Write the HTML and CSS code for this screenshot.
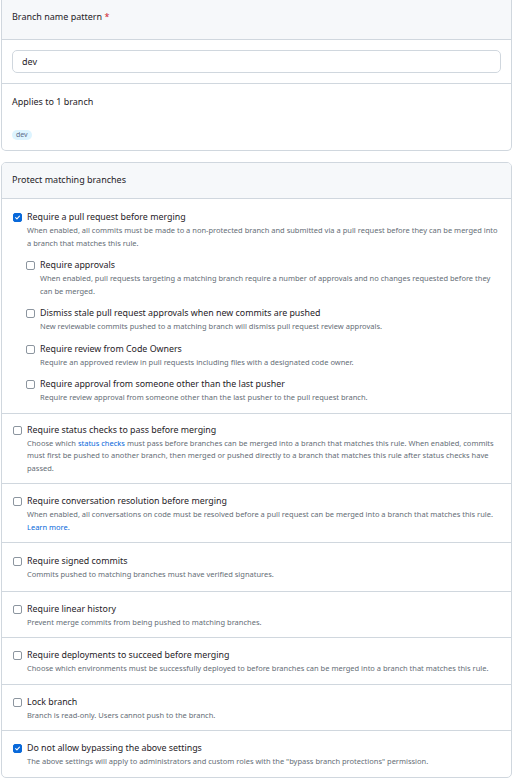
FILE: index.html
```html
<!DOCTYPE html>
<html>
<head>
<meta charset="utf-8">
<link rel="stylesheet" href="styles.css">
</head>
<body>
<div class="box box-top">
  <div class="box-header">Branch name pattern <span class="req">*</span></div>
  <div class="box-section input-section">
    <div class="text-input">dev</div>
  </div>
  <div class="box-section applies">
    <div class="applies-title">Applies to 1 branch</div>
    <span class="badge">dev</span>
  </div>
</div>

<div class="box box-protect">
  <div class="box-header">Protect matching branches</div>
  <div class="row row-first">
    <div class="opt">
      <span class="cb checked"><svg viewBox="0 0 10 10"><path d="M2.3 5.2 L4.2 7 L7.8 3" fill="none" stroke="#fff" stroke-width="1.5" stroke-linecap="round" stroke-linejoin="round"/></svg></span>
      <div class="opt-body">
        <div class="opt-title">Require a pull request before merging</div>
        <div class="opt-desc">When enabled, all commits must be made to a non-protected branch and submitted via a pull request before they can be merged into a branch that matches this rule.</div>
      </div>
    </div>
    <div class="subs">
      <div class="opt sub">
        <span class="cb"></span>
        <div class="opt-body">
          <div class="opt-title">Require approvals</div>
          <div class="opt-desc">When enabled, pull requests targeting a matching branch require a number of approvals and no changes requested before they can be merged.</div>
        </div>
      </div>
      <div class="opt sub">
        <span class="cb"></span>
        <div class="opt-body">
          <div class="opt-title">Dismiss stale pull request approvals when new commits are pushed</div>
          <div class="opt-desc">New reviewable commits pushed to a matching branch will dismiss pull request review approvals.</div>
        </div>
      </div>
      <div class="opt sub">
        <span class="cb"></span>
        <div class="opt-body">
          <div class="opt-title">Require review from Code Owners</div>
          <div class="opt-desc">Require an approved review in pull requests including files with a designated code owner.</div>
        </div>
      </div>
      <div class="opt sub">
        <span class="cb"></span>
        <div class="opt-body">
          <div class="opt-title">Require approval from someone other than the last pusher</div>
          <div class="opt-desc">Require review approval from someone other than the last pusher to the pull request branch.</div>
        </div>
      </div>
    </div>
  </div>

  <div class="row row-status">
    <div class="opt">
      <span class="cb"></span>
      <div class="opt-body">
        <div class="opt-title">Require status checks to pass before merging</div>
        <div class="opt-desc">Choose which <a class="link">status checks</a> must pass before branches can be merged into a branch that matches this rule. When enabled, commits must first be pushed to another branch, then merged or pushed directly to a branch that matches this rule after status checks have passed.</div>
      </div>
    </div>
  </div>

  <div class="row">
    <div class="opt">
      <span class="cb"></span>
      <div class="opt-body">
        <div class="opt-title">Require conversation resolution before merging</div>
        <div class="opt-desc">When enabled, all conversations on code must be resolved before a pull request can be merged into a branch that matches this rule. <a class="link">Learn more.</a></div>
      </div>
    </div>
  </div>

  <div class="row row-signed">
    <div class="opt">
      <span class="cb"></span>
      <div class="opt-body">
        <div class="opt-title">Require signed commits</div>
        <div class="opt-desc">Commits pushed to matching branches must have verified signatures.</div>
      </div>
    </div>
  </div>

  <div class="row">
    <div class="opt">
      <span class="cb"></span>
      <div class="opt-body">
        <div class="opt-title">Require linear history</div>
        <div class="opt-desc">Prevent merge commits from being pushed to matching branches.</div>
      </div>
    </div>
  </div>

  <div class="row">
    <div class="opt">
      <span class="cb"></span>
      <div class="opt-body">
        <div class="opt-title">Require deployments to succeed before merging</div>
        <div class="opt-desc">Choose which environments must be successfully deployed to before branches can be merged into a branch that matches this rule.</div>
      </div>
    </div>
  </div>

  <div class="row">
    <div class="opt">
      <span class="cb"></span>
      <div class="opt-body">
        <div class="opt-title">Lock branch</div>
        <div class="opt-desc">Branch is read-only. Users cannot push to the branch.</div>
      </div>
    </div>
  </div>

  <div class="row">
    <div class="opt">
      <span class="cb checked"><svg viewBox="0 0 10 10"><path d="M2.3 5.2 L4.2 7 L7.8 3" fill="none" stroke="#fff" stroke-width="1.5" stroke-linecap="round" stroke-linejoin="round"/></svg></span>
      <div class="opt-body">
        <div class="opt-title">Do not allow bypassing the above settings</div>
        <div class="opt-desc">The above settings will apply to administrators and custom roles with the "bypass branch protections" permission.</div>
      </div>
    </div>
  </div>
</div>
</body>
</html>
```

FILE: styles.css
```css
* { box-sizing: border-box; }
html, body {
  margin: 0;
  padding: 0;
  background: #ffffff;
}
body {
  font-family: "Noto Sans", "Open Sans", sans-serif;
  color: #1f2328;
  padding: 0 1px;
}
.box {
  border: 1px solid #d0d7de;
  border-radius: 5px;
  background: #fff;
  overflow: hidden;
}
.box-top {
  border-top: 0;
  border-top-left-radius: 0;
  border-top-right-radius: 0;
  height: 151px;
}
.box-protect {
  margin-top: 11px;
}
.box-header {
  background: #f6f8fa;
  border-bottom: 1px solid #d0d7de;
  font-size: 9px;
  line-height: 14px;
  padding: 10px 10px 15px;
  color: #1f2328;
}
.box-protect .box-header {
  padding: 10px 10px 11px;
}
.req { color: #cf222e; }
.input-section {
  padding: 10px 10px;
  border-bottom: 1px solid #d0d7de;
}
.text-input {
  height: 23px;
  border: 1px solid #d0d7de;
  border-radius: 5px;
  padding: 0 9px;
  font-size: 9px;
  line-height: 21px;
}
.applies {
  padding: 11px 10px 0;
}
.applies-title {
  font-size: 9px;
  line-height: 14px;
}
.badge {
  display: inline-block;
  margin-top: 21px;
  background: #ddf4ff;
  color: #5b6b8a;
  font-size: 7px;
  line-height: 10px;
  height: 10px;
  padding: 0 4px;
  border-radius: 6px;
}
.row {
  border-top: 1px solid #d0d7de;
  padding: 10px 10px 9px;
}
.row-first {
  border-top: 0;
  padding-top: 11px;
  padding-bottom: 9px;
}
.row-status { padding-top: 9px; }
.row-signed { padding-top: 11px; padding-bottom: 10px; }
.opt {
  display: flex;
  align-items: flex-start;
  gap: 5px;
}
.subs {
  padding-left: 13px;
}
.sub { margin-top: 9px; }
.cb {
  flex: none;
  width: 9px;
  height: 9px;
  margin-top: 3px;
  margin-left: 1px;
  border: 1px solid #8c959f;
  border-radius: 2px;
  background: #fff;
  display: flex;
}
.cb.checked {
  background: #0969da;
  border-color: #0969da;
}
.cb svg { width: 100%; height: 100%; }
.opt-body { flex: 1; min-width: 0; }
.opt-title {
  font-size: 8.85px;
  line-height: 14px;
  color: #1f2328;
}
.opt-desc {
  font-size: 7.5px;
  line-height: 12.5px;
  color: #656d76;
}
.link { color: #0969da; }
```
